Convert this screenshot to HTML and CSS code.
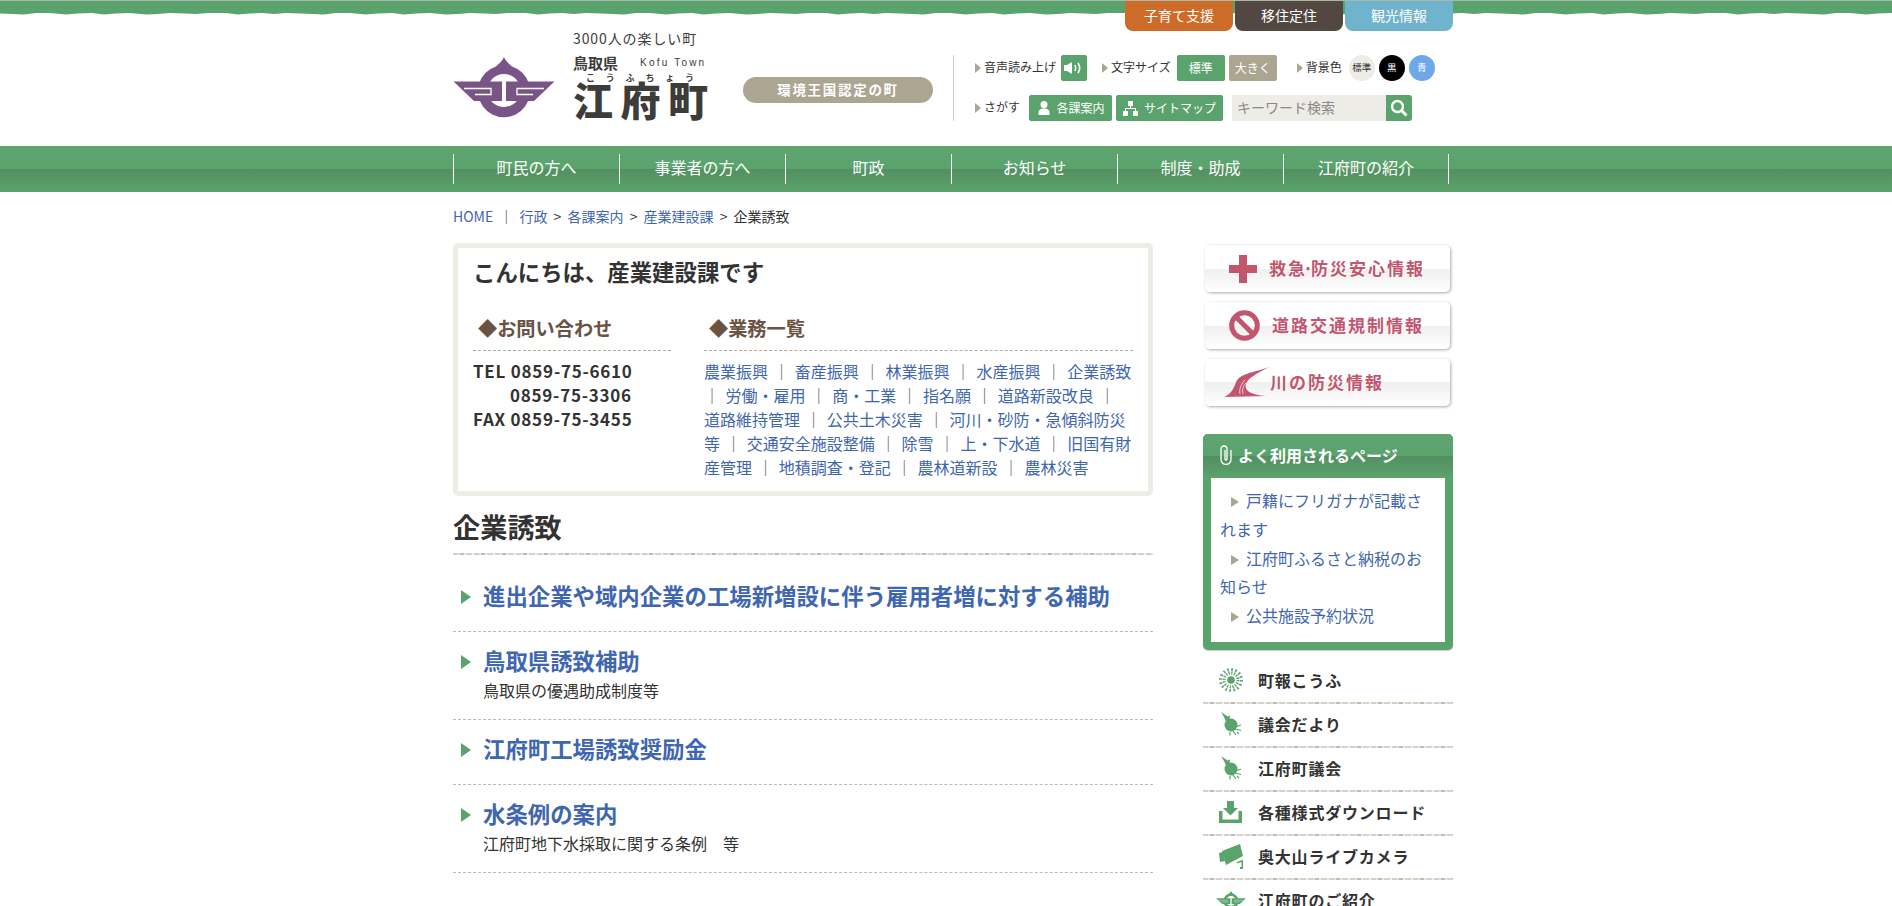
FILE: index.html
```html
<!DOCTYPE html>
<html lang="ja">
<head>
    <meta charset="UTF-8">
    <meta name="viewport" content="width=device-width, initial-scale=1.0">
    <title>企業誘致 | 江府町</title>
    <link rel="stylesheet" href="styles.css">
</head>
<body>
    <svg class="defs" width="0" height="0">
        <symbol id="emblem" viewBox="0 0 102 61">
            <path d="M51 0c1.500 4 5 6.500 8 9.500a26 26 0 1 1-16 0c3-3 6.500-5.500 8-9.500z"/>
            <circle cx="51" cy="33.500" r="16.500" fill="#fff"/>
            <path d="M0.500 24.500H49.500V44H21zM101.500 24.500H52.500V44H81z"/>
            <path d="M11 31.500H38v6H22M91 31.500H64v6H80M49.700 24v21M52.300 24v21" fill="none" stroke="#fff" stroke-width="1.300"/>
        </symbol>
        <symbol id="bulb" viewBox="0 0 22 24">
            <circle cx="11" cy="13" r="6.500"/>
            <path d="M1 0L7.500 4.500 10 3.500 9.500 7.500 6 9.500 4 5z"/>
            <path d="M15 15l6-2M15 17l6 1.500M13 19l3 4M10 20v3.500M17 20l2 2" fill="none" stroke="currentColor" stroke-width="1.200"/>
        </symbol>
    </svg>

    <header class="site-header">
        <svg class="wave" width="100%" height="16">
            <defs>
                <pattern id="wavePat" width="300" height="16" patternUnits="userSpaceOnUse">
                    <path d="M0 0H300V12.500L286 12 274 13 262 12 250 12.500 238 13.500 226 12 208 12 196 13 184 12.500 170 12 158 13 146 13.500 130 12 116 12.500 104 13.500 92 12 78 12.500 66 13.500 50 12 36 12 24 13.500 12 13 0 12.500Z" fill="#5ba36c"/>
                </pattern>
            </defs>
            <rect width="100%" height="16" fill="url(#wavePat)"/>
        </svg>
        <div class="container">
            <div class="top-tabs">
                <a class="tab tab-orange">子育て支援</a>
                <a class="tab tab-brown">移住定住</a>
                <a class="tab tab-blue">観光情報</a>
            </div>
            <div class="header-main">
                <svg class="emblem" width="102" height="61"><use href="#emblem"/></svg>
                <div class="logo">
                    <div class="logo-catch">3000人の楽しい町</div>
                    <div class="logo-pref"><span>鳥取県</span><span class="logo-en">Kofu Town</span></div>
                    <div class="logo-kana"><span>こ</span><span>う</span><span>ふ</span><span>ち</span><span>ょ</span><span>う</span></div>
                    <div class="logo-name">江府町</div>
                </div>
                <div class="pill">環境王国認定の町</div>
                <div class="tools">
                    <div class="tool-row">
                        <span class="tool-label">音声読み上げ</span>
                        <a class="tool-btn btn-sound">
                            <svg width="20" height="16" viewBox="0 0 20 16"><path d="M0 5h3l5-3v12l-5-3H0z" fill="#fff"/><path d="M11 5c1 2 1 4 0 6M14 3c2 3 2 7 0 10" fill="none" stroke="#fff" stroke-width="1.600"/></svg>
                        </a>
                        <span class="tool-label label-size">文字サイズ</span>
                        <a class="tool-btn btn-size"><span>標準</span></a>
                        <a class="tool-btn btn-size btn-tan"><span>大きく</span></a>
                        <span class="tool-label label-bg">背景色</span>
                        <a class="circle circle-std">標準</a>
                        <a class="circle circle-black">黒</a>
                        <a class="circle circle-blue">青</a>
                    </div>
                    <div class="tool-row">
                        <span class="tool-label">さがす</span>
                        <a class="tool-btn btn-link btn-section">
                            <svg width="14" height="14" viewBox="0 0 14 14"><circle cx="7" cy="3.500" r="3.500" fill="#fff"/><path d="M1.500 14v-3c0-2 2-3 3.500-3.500h4c1.500.5 3.500 1.500 3.500 3.500v3z" fill="#fff"/></svg>
                            <span>各課案内</span>
                        </a>
                        <a class="tool-btn btn-link btn-map">
                            <svg width="15" height="15" viewBox="0 0 15 15"><path d="M5 0h5v5H8v2h5v3h2v5H10v-5h2V8H3v2h2v5H0v-5h2V7h5V5H5z" fill="#fff"/></svg>
                            <span>サイトマップ</span>
                        </a>
                        <div class="search">
                            <span class="search-text">キーワード検索</span>
                            <a class="search-btn">
                                <svg width="18" height="18" viewBox="0 0 18 18"><circle cx="7.500" cy="7.500" r="5.500" fill="none" stroke="#fff" stroke-width="2.400"/><path d="M11.500 11.500L16.500 16.500" stroke="#fff" stroke-width="3"/></svg>
                            </a>
                        </div>
                    </div>
                </div>
            </div>
        </div>
    </header>

    <nav class="global-nav">
        <ul class="container nav-list">
            <li>町民の方へ</li>
            <li>事業者の方へ</li>
            <li>町政</li>
            <li>お知らせ</li>
            <li>制度・助成</li>
            <li>江府町の紹介</li>
        </ul>
    </nav>

    <div class="container">
        <p class="breadcrumb"><a>HOME</a> ｜ <a>行政</a> &gt; <a>各課案内</a> &gt; <a>産業建設課</a> &gt; 企業誘致</p>

        <div class="columns">
            <main class="main">
                <section class="info-box">
                    <h2 class="greeting">こんにちは、産業建設課です</h2>
                    <div class="info-cols">
                        <div class="info-contact">
                            <h3 class="info-head">◆お問い合わせ</h3>
                            <p class="tel">TEL 0859-75-6610</p>
                            <p class="tel tel-indent">0859-75-3306</p>
                            <p class="tel">FAX 0859-75-3455</p>
                        </div>
                        <div class="info-work">
                            <h3 class="info-head">◆業務一覧</h3>
                            <p class="work-list"><a>農業振興</a> ｜ <a>畜産振興</a> ｜ <a>林業振興</a> ｜ <a>水産振興</a> ｜ <a>企業誘致</a> ｜ <a>労働・雇用</a> ｜ <a>商・工業</a> ｜ <a>指名願</a> ｜ <a>道路新設改良</a> ｜ <a>道路維持管理</a> ｜ <a>公共土木災害</a> ｜ <a>河川・砂防・急傾斜防災等</a> ｜ <a>交通安全施設整備</a> ｜ <a>除雪</a> ｜ <a>上・下水道</a> ｜ <a>旧国有財産管理</a> ｜ <a>地積調査・登記</a> ｜ <a>農林道新設</a> ｜ <a>農林災害</a></p>
                        </div>
                    </div>
                </section>

                <h1 class="page-title rule">企業誘致</h1>

                <ul class="entries">
                    <li>
                        <h2 class="entry-title"><a>進出企業や域内企業の工場新増設に伴う雇用者増に対する補助</a></h2>
                    </li>
                    <li>
                        <h2 class="entry-title"><a>鳥取県誘致補助</a></h2>
                        <p class="entry-sub">鳥取県の優遇助成制度等</p>
                    </li>
                    <li>
                        <h2 class="entry-title"><a>江府町工場誘致奨励金</a></h2>
                    </li>
                    <li>
                        <h2 class="entry-title"><a>水条例の案内</a></h2>
                        <p class="entry-sub">江府町地下水採取に関する条例　等</p>
                    </li>
                </ul>
            </main>

            <aside class="side">
                <a class="banner">
                    <svg width="28" height="28" viewBox="0 0 28 28"><path d="M10 0h8v10h10v8H18v10h-8V18H0v-8h10z" fill="#c2566f"/></svg>
                    <span class="banner-text">救急<span class="banner-dot">·</span>防災安心情報</span>
                </a>
                <a class="banner">
                    <svg width="31" height="31" viewBox="0 0 31 31"><circle cx="15.500" cy="15.500" r="12.800" fill="none" stroke="#c2566f" stroke-width="5"/><path d="M6.500 6.500l18 18" stroke="#c2566f" stroke-width="5"/></svg>
                    <span class="banner-text">道路交通規制情報</span>
                </a>
                <a class="banner banner-river">
                    <svg width="46" height="31" viewBox="0 0 46 31"><path d="M0 30C8 27 10 20 13 13 18 6 32 5 45 0 32 7 24 11 22 17 20 23 26 28 42 29Z" fill="#c2566f"/><path d="M16 27c-1-5 1-10 5-14M19 27c-1-4 0-8 3-11" fill="none" stroke="#fff" stroke-width=".7"/></svg>
                    <span class="banner-text">川の防災情報</span>
                </a>

                <section class="panel">
                    <h2 class="panel-head">
                        <svg width="14" height="20" viewBox="0 0 14 20"><path d="M12 5v9.500a5 5 0 0 1-10 0V4a3 3 0 0 1 6 0v10a1 1 0 0 1-2 0V5" fill="none" stroke="#fff" stroke-width="1.300"/></svg>
                        よく利用されるページ
                    </h2>
                    <ul class="panel-list">
                        <li><a>戸籍にフリガナが記載されます</a></li>
                        <li><a>江府町ふるさと納税のお知らせ</a></li>
                        <li><a>公共施設予約状況</a></li>
                    </ul>
                </section>

                <ul class="side-links">
                    <li class="rule">
                        <span class="side-icon">
                            <svg width="24" height="24" viewBox="0 0 24 24"><circle cx="12" cy="12" r="3.800" fill="#5ba36c"/><circle cx="12" cy="12" r="7" fill="none" stroke="#5ba36c" stroke-width="3" stroke-dasharray="1.300 1.450"/><circle cx="12" cy="12" r="10.500" fill="none" stroke="#5ba36c" stroke-width="3" stroke-dasharray="1.600 2.520"/></svg>
                        </span>
                        町報こうふ
                    </li>
                    <li class="rule">
                        <span class="side-icon"><svg class="green-fill" width="22" height="24"><use href="#bulb"/></svg></span>
                        議会だより
                    </li>
                    <li class="rule">
                        <span class="side-icon"><svg class="green-fill" width="22" height="24"><use href="#bulb"/></svg></span>
                        江府町議会
                    </li>
                    <li class="rule">
                        <span class="side-icon">
                            <svg width="23" height="22" viewBox="0 0 23 22"><path d="M8 0h7v7h4l-7.500 7.500L4 7h4zM0 10h3.500v8.500h16V10H23v12H0z" fill="#5ba36c"/></svg>
                        </span>
                        各種様式ダウンロード
                    </li>
                    <li class="rule">
                        <span class="side-icon">
                            <svg width="24" height="25" viewBox="0 0 24 25"><path d="M3 7L21 0l3 12L7 21z" fill="#5ba36c"/><path d="M0 9l4-1 2 9-5 1zM18 18l5-2 1 .5V25h-3v-2h1.500v-5L18 19.500z" fill="#5ba36c"/></svg>
                        </span>
                        奥大山ライブカメラ
                    </li>
                    <li>
                        <span class="side-icon"><svg class="green-fill" width="30" height="18"><use href="#emblem"/></svg></span>
                        江府町のご紹介
                    </li>
                </ul>
            </aside>
        </div>
    </div>
</body>
</html>
```

FILE: styles.css
```css
* {
    box-sizing: border-box;
}

html, body {
    margin: 0;
    padding: 0;
}

body {
    background: #fff;
    color: #333;
    font-family: "Noto Sans CJK JP", "Noto Sans", sans-serif;
    font-size: 16px;
}

h1, h2, h3, p, ul {
    margin: 0;
    padding: 0;
}

ul {
    list-style: none;
}

a {
    color: #3f66b0;
    text-decoration: none;
}

.defs {
    position: absolute;
}

.container {
    width: 1000px;
    margin: 0 0 0 453px;
}

/* header */
.site-header {
    position: relative;
    height: 146px;
    border-top: 1px solid #a9b8a9;
}

.wave {
    position: absolute;
    top: 0;
    left: 0;
}

.site-header .container {
    position: relative;
}

.top-tabs {
    display: flex;
    justify-content: flex-end;
    gap: 2px;
    height: 30px;
}

.tab {
    width: 108px;
    color: #fff;
    font-size: 14px;
    line-height: 28px;
    text-align: center;
    border-radius: 0 0 8px 8px;
}

.tab-orange { background: #cc6c28; }
.tab-brown { background: #524841; }
.tab-blue { background: #70b3cc; }

.header-main {
    display: flex;
}

.emblem {
    flex: none;
    margin-top: 26px;
    fill: #7a5487;
}

.logo {
    flex: none;
    width: 135px;
    margin: -1px 0 0 18px;
    color: #3c3c38;
    white-space: nowrap;
}

.logo-catch {
    font-size: 14px;
    letter-spacing: 0.9px;
    line-height: 16px;
}

.logo-pref {
    display: flex;
    align-items: center;
    margin-top: 8px;
    font-size: 15px;
    font-weight: 700;
    line-height: 18px;
}

.logo-en {
    margin-left: 22px;
    font-family: "Liberation Sans", sans-serif;
    font-size: 10px;
    font-weight: 400;
    letter-spacing: 2.2px;
}

.logo-kana {
    display: flex;
    justify-content: space-between;
    width: 108px;
    margin: 1px 0 0 13px;
    font-size: 9px;
    font-weight: 700;
    line-height: 10px;
}

.logo-name {
    margin-top: -6px;
    font-size: 40px;
    font-weight: 900;
    line-height: 44px;
    letter-spacing: 7.500px;
}

.pill {
    flex: none;
    width: 190px;
    height: 26px;
    margin: 46px 0 0 35px;
    background: #aca591;
    border-radius: 13px;
    color: #fff;
    font-size: 13.500px;
    font-weight: 700;
    letter-spacing: 1.700px;
    line-height: 25px;
    text-align: center;
}

.tools {
    display: flex;
    flex-direction: column;
    gap: 14px;
    height: 66px;
    margin: 24px 0 0 20px;
    padding-left: 21px;
    border-left: 1px solid #ccc;
}

.tool-row {
    display: flex;
    align-items: center;
    height: 26px;
}

.tool-label {
    display: flex;
    align-items: center;
    font-size: 12px;
    line-height: 24px;
    padding-bottom: 2px;
    white-space: nowrap;
}

.tool-label::before {
    content: "";
    width: 0;
    height: 0;
    margin: 2px 3px 0 0;
    border-left: 6px solid #aca591;
    border-top: 5px solid transparent;
    border-bottom: 5px solid transparent;
}

.label-size { margin-left: 15px; }
.label-bg { margin-left: 20px; }

.tool-btn {
    display: flex;
    align-items: center;
    justify-content: center;
    height: 26px;
    background: #5ba36c;
    border-radius: 2px;
    color: #fff;
    font-size: 12px;
}

.tool-btn span {
    margin-top: -2px;
}

.btn-sound {
    width: 26px;
    margin-left: 5px;
}

.btn-size {
    width: 48px;
    margin-left: 6px;
}

.btn-tan {
    margin-left: 4px;
    background: #aca591;
}

.btn-link {
    gap: 6px;
}

.btn-section {
    width: 83px;
    margin-left: 9px;
}

.btn-map {
    width: 107px;
    margin-left: 4px;
}

.circle {
    width: 26px;
    height: 26px;
    margin-left: 4px;
    border-radius: 50%;
    color: #fff;
    font-size: 9.500px;
    line-height: 25px;
    text-align: center;
}

.circle-std {
    margin-left: 7px;
    background: #edece7;
    color: #333;
}

.circle-black { background: #000; }
.circle-blue { background: #6fa8e8; }

.search {
    display: flex;
    width: 180px;
    height: 26px;
    margin-left: 9px;
}

.search-text {
    flex: 1;
    padding-left: 5px;
    background: #edece7;
    border-radius: 2px 0 0 2px;
    color: #888;
    font-size: 14px;
    line-height: 24px;
}

.search-btn {
    display: flex;
    align-items: center;
    justify-content: center;
    width: 26px;
    background: #5ba36c;
    border-radius: 0 3px 3px 0;
}

/* global nav */
.global-nav {
    height: 46px;
    padding-top: 8px;
    background: linear-gradient(#5ea56f 0, #5ba36c 50%, #538f62 50%, #5ba36c 100%);
}

.nav-list {
    display: flex;
}

.nav-list li {
    width: 166px;
    height: 30px;
    border-left: 1px solid #fff;
    color: #fff;
    line-height: 27px;
    text-align: center;
}

.nav-list li:last-child {
    border-right: 1px solid #fff;
}

/* content */
.breadcrumb {
    margin: 14px 0 17px;
    font-size: 14px;
    line-height: 20px;
    word-spacing: 3px;
}

.columns {
    display: flex;
    justify-content: space-between;
}

.main {
    width: 700px;
}

.info-box {
    height: 253px;
    padding: 8px 15px 0;
    border: 5px solid #edece7;
    border-radius: 5px;
}

.greeting {
    font-size: 22.400px;
    font-weight: 700;
    line-height: 30px;
}

.info-cols {
    display: flex;
    gap: 33px;
    margin-top: 28px;
}

.info-contact {
    width: 198px;
}

.info-work {
    width: 429px;
}

.info-head {
    height: 37px;
    margin-bottom: 8px;
    padding-left: 5px;
    border-bottom: 1px dashed #b8a99a;
    color: #6b5344;
    font-size: 19.200px;
    font-weight: 700;
    line-height: 28px;
}

.tel {
    font-size: 17px;
    font-weight: 700;
    letter-spacing: 0.750px;
    line-height: 24px;
}

.tel-indent {
    padding-left: 37px;
}

.work-list {
    line-height: 24px;
    word-spacing: 1.800px;
    color: #556;
}

.page-title {
    margin-top: 12px;
    height: 47px;
    font-size: 27.200px;
    font-weight: 700;
    line-height: 36px;
}

/* textured rule used under the heading and the side links */
.rule {
    background: repeating-linear-gradient(90deg, #d5cfc6 0 5px, #e6e2dc 5px 7px, #c4bbaf 7px 11px, #ece9e4 11px 13px, #d8d2c9 13px 19px, #f2f0ec 19px 21px) bottom / 100% 2px no-repeat;
}

.entries {
    padding-top: 12px;
}

.entries li {
    padding: 12px 0 20px;
    border-bottom: 1px dashed #bbb;
}

.entry-title {
    display: flex;
    align-items: center;
    font-size: 22.400px;
    font-weight: 700;
    line-height: 32px;
}

.entry-title::before {
    content: "";
    flex: none;
    width: 0;
    height: 0;
    margin: 4px 12px 0 8px;
    border-left: 10px solid #5ba36c;
    border-top: 7px solid transparent;
    border-bottom: 7px solid transparent;
}

.entry-sub {
    margin: 3px 0 -2px;
    padding-left: 30px;
    line-height: 22px;
}

/* sidebar */
.side {
    width: 250px;
    padding-top: 2px;
}

.banner {
    position: relative;
    display: flex;
    align-items: center;
    width: 245px;
    height: 47px;
    margin: 0 0 10px 2px;
    padding-left: 24px;
    background: linear-gradient(#fff 0, #fff 50%, #efefef 50%, #fff 100%);
    border-radius: 5px;
    box-shadow: 1px 1px 3px #aaa;
}

.banner-text {
    margin: -2px 0 0 12px;
    color: #c2566f;
    font-size: 17px;
    font-weight: 700;
    letter-spacing: 2px;
    text-shadow: 0 0 2px #fff, 0 0 2px #fff;
    white-space: nowrap;
}

.banner-dot {
    margin: 0 -4px;
}

.banner-river {
    padding-left: 19px;
}

.banner-river .banner-text {
    margin-left: 0;
}

.panel {
    margin-top: 28px;
    padding: 0 8px 8px;
    height: 216px;
    background: #5ba36c;
    border-radius: 5px;
    box-shadow: 0 1px 1px #ccc;
}

.panel-head {
    display: flex;
    align-items: center;
    gap: 5px;
    height: 44px;
    margin: 0 -8px;
    padding: 0 0 3px 16px;
    background: linear-gradient(#5ea56f 0, #5ba36c 50%, #538f62 50%, #5ba36c 100%);
    border-radius: 5px 5px 0 0;
    color: #fff;
    font-size: 16px;
    font-weight: 700;
}

.panel-list {
    height: 164px;
    padding: 8px 9px 0;
    background: #fff;
    line-height: 28.800px;
}

.panel-list li::before {
    content: "";
    display: inline-block;
    width: 0;
    height: 0;
    margin: 0 7px 0 11px;
    border-left: 8px solid #aca591;
    border-top: 5px solid transparent;
    border-bottom: 5px solid transparent;
}

.side-links {
    margin-top: 10px;
}

.side-links li {
    display: flex;
    align-items: center;
    height: 44px;
    padding-bottom: 4px;
    font-weight: 700;
    letter-spacing: 0.800px;
}

.side-icon {
    display: flex;
    justify-content: center;
    flex: none;
    width: 55px;
}

.green-fill {
    color: #5ba36c;
    fill: #5ba36c;
}
```
